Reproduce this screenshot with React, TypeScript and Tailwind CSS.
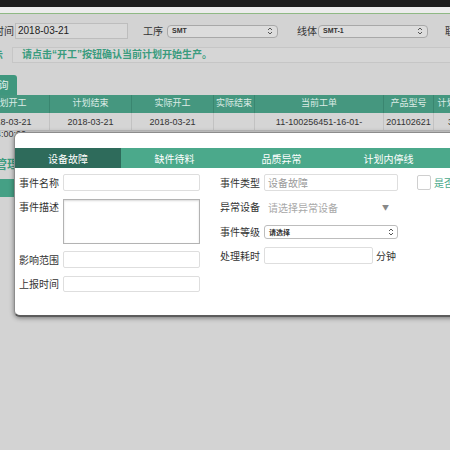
import React from "react";

const cols = [
  { w: "w-[82px]", h: "计划开工", d: "2018-03-21", d2: "14:00:00" },
  { w: "w-[82px]", h: "计划结束", d: "2018-03-21" },
  { w: "w-[82px]", h: "实际开工", d: "2018-03-21" },
  { w: "w-[41px]", h: "实际结束", d: "" },
  { w: "w-[129px]", h: "当前工单", d: "11-100256451-16-01-" },
  { w: "w-[50px]", h: "产品型号", d: "201102621" },
  { w: "w-[44px]", h: "计划数量", d: "300" },
];

const tabs = ["设备故障", "缺件待料", "品质异常", "计划内停线"];

function UpDown({ className }: { className?: string }) {
  return (
    <svg className={className} width="6" height="8" viewBox="0 0 6 8" fill="none" stroke="#555" strokeWidth="1">
      <path d="M1 3 L3 1 L5 3" />
      <path d="M1 5 L3 7 L5 5" />
    </svg>
  );
}

function Label({ children }: { children: React.ReactNode }) {
  return <span className="w-[44px] shrink-0 text-[10px] leading-[14px] text-[#333]">{children}</span>;
}

export default function App() {
  return (
    <div className="relative w-[450px] h-[450px] overflow-hidden bg-[#d3d3d3] font-['Liberation_Sans','Noto_Sans_CJK_SC',sans-serif]">
      {/* window chrome */}
      <div className="h-[7px] bg-[#1d1d1d]" />
      <div className="h-[6px] bg-[#ececec]" />
      <div className="h-[1px] bg-[#8fb984]" />

      {/* filter row */}
      <div className="flex items-center h-[16px] mt-[9px] whitespace-nowrap">
        <span className="ml-[-6px] w-[21px] shrink-0 text-[10px] text-[#333]">时间</span>
        <div className="w-[113px] h-[16px] shrink-0 border border-[#bdbdbd] bg-[#d8d8d8] pl-[2px] text-[10px] leading-[14px] text-[#222]">
          2018-03-21
        </div>
        <span className="ml-[15px] w-[24px] shrink-0 text-[10px] text-[#333]">工序</span>
        <div className="w-[111px] h-[13px] shrink-0 flex items-center justify-between rounded-[4px] border border-[#a8a8a8] bg-[#dcdcdc] px-[4px]">
          <span className="text-[7px] font-bold text-[#333]">SMT</span>
          <UpDown />
        </div>
        <span className="ml-[19px] w-[21px] shrink-0 text-[10px] text-[#333]">线体</span>
        <div className="w-[110px] h-[13px] shrink-0 flex items-center justify-between rounded-[4px] border border-[#a8a8a8] bg-[#dcdcdc] px-[4px]">
          <span className="text-[7px] font-bold text-[#333]">SMT-1</span>
          <UpDown />
        </div>
        <span className="ml-[17px] shrink-0 text-[10px] text-[#333]">联系</span>
      </div>

      {/* hint row */}
      <div className="flex items-center h-[16px] mt-[8px] whitespace-nowrap">
        <span className="ml-[-37px] w-[40px] shrink-0 text-right text-[10px] font-bold text-[#3c9c7f]">提示</span>
        <div className="ml-[9px] w-[460px] h-[16px] shrink-0 border border-[#c6c6c6] bg-[#d6d6d6] pl-[9px] text-[10px] leading-[14px] font-bold text-[#3a9c7e]">
          请点击“开工”按钮确认当前计划开始生产。
        </div>
      </div>

      {/* tab */}
      <div className="mt-[12px] ml-[-20px] w-[37px] h-[20px] rounded-t-[3px] bg-[#3f977e] flex items-center justify-center text-[10px] text-[#e6f2ee]">
        查询
      </div>

      {/* table */}
      <div className="ml-[-32px] whitespace-nowrap">
        <div className="flex h-[18px] bg-[#45977f]">
          {cols.map((c) => (
            <div key={c.h} className={`${c.w} shrink-0 overflow-hidden border-r border-[#3a8670] flex items-center justify-center text-[9px] text-[#dcebe5]`}>
              {c.h}
            </div>
          ))}
        </div>
        <div className="flex h-[18px] bg-[#d5d5d5] border-b border-[#bdbdbd]">
          {cols.map((c) => (
            <div key={c.h} className={`${c.w} shrink-0 border-r border-[#c2c2c2] flex flex-col items-center pt-[3px] text-[9px] leading-[12px] text-[#333]`}>
              <span>{c.d}</span>
              {c.d2 && <span>{c.d2}</span>}
            </div>
          ))}
        </div>
      </div>

      {/* left nav fragments */}
      <div className="mt-[28px] ml-[-5px] text-[12px] leading-[12px] font-bold text-[#3c9c7f] whitespace-nowrap">管理</div>
      <div className="mt-[8px] ml-[-40px] w-[54px] h-[18px] bg-[#45a085]" />

      {/* modal */}
      <div className="absolute left-[14px] top-[132px] w-[470px] h-[185px] bg-white rounded-[6px] border border-[#8c8c8c] border-b-2 border-b-[#5c5c5c] shadow-[0_1px_5px_rgba(0,0,0,0.45)] pt-[15px] font-['Noto_Sans_CJK_SC',sans-serif]">
        <div className="flex h-[20px]">
          {tabs.map((t, i) => (
            <div
              key={t}
              className={`${i === 0 ? "w-[106px] bg-[#2e6b5b]" : "w-[107px] bg-[#4ba98b]"} shrink-0 flex items-center justify-center text-[10px] text-white`}
            >
              {t}
            </div>
          ))}
          <div className="flex-1 bg-[#4ba98b]" />
        </div>

        <div className="flex pl-[4px] whitespace-nowrap">
          {/* left column */}
          <div className="w-[201px] shrink-0 flex flex-col">
            <div className="mt-[6px] h-[17px] flex items-center">
              <Label>事件名称</Label>
              <div className="w-[137px] h-[17px] border border-[#dedede] rounded-[2px]" />
            </div>
            <div className="mt-[8px] flex items-start">
              <span className="w-[44px] shrink-0 pt-[1px] text-[10px] leading-[14px] text-[#333]">事件描述</span>
              <div className="w-[137px] h-[45px] border border-[#b3b3b3] shadow-[inset_0_1px_2px_rgba(0,0,0,0.15)]" />
            </div>
            <div className="mt-[7px] h-[17px] flex items-center">
              <Label>影响范围</Label>
              <div className="w-[137px] h-[17px] border border-[#dedede] rounded-[2px]" />
            </div>
            <div className="mt-[8px] h-[16px] flex items-center">
              <Label>上报时间</Label>
              <div className="w-[137px] h-[16px] border border-[#dedede] rounded-[2px]" />
            </div>
          </div>

          {/* right column */}
          <div className="flex flex-col">
            <div className="mt-[6px] h-[17px] flex items-center">
              <Label>事件类型</Label>
              <div className="w-[134px] h-[17px] border border-[#dedede] rounded-[2px] pl-[3px] text-[10px] leading-[15px] text-[#9a9a9a]">
                设备故障
              </div>
              <div className="ml-[19px] w-[14px] h-[15px] border border-[#cfcfcf] rounded-[2px]" />
              <span className="ml-[3px] text-[10px] text-[#4aa98b]">是否停线</span>
            </div>
            <div className="mt-[8px] h-[16px] flex items-center">
              <Label>异常设备</Label>
              <div className="w-[134px] flex items-center justify-between pl-[4px] pr-[9px]">
                <span className="text-[10px] text-[#a8a8a8]">请选择异常设备</span>
                <span className="text-[7px] text-[#888]">▼</span>
              </div>
            </div>
            <div className="mt-[10px] h-[14px] flex items-center">
              <Label>事件等级</Label>
              <div className="w-[134px] h-[14px] flex items-center justify-between border border-[#bdbdbd] rounded-[3px] pl-[4px] pr-[3px]">
                <span className="text-[7px] font-bold text-[#333]">请选择</span>
                <UpDown />
              </div>
            </div>
            <div className="mt-[8px] h-[17px] flex items-center">
              <Label>处理耗时</Label>
              <div className="w-[109px] h-[17px] border border-[#dedede] rounded-[2px]" />
              <span className="ml-[3px] text-[10px] text-[#333]">分钟</span>
            </div>
          </div>
        </div>
      </div>
    </div>
  );
}
